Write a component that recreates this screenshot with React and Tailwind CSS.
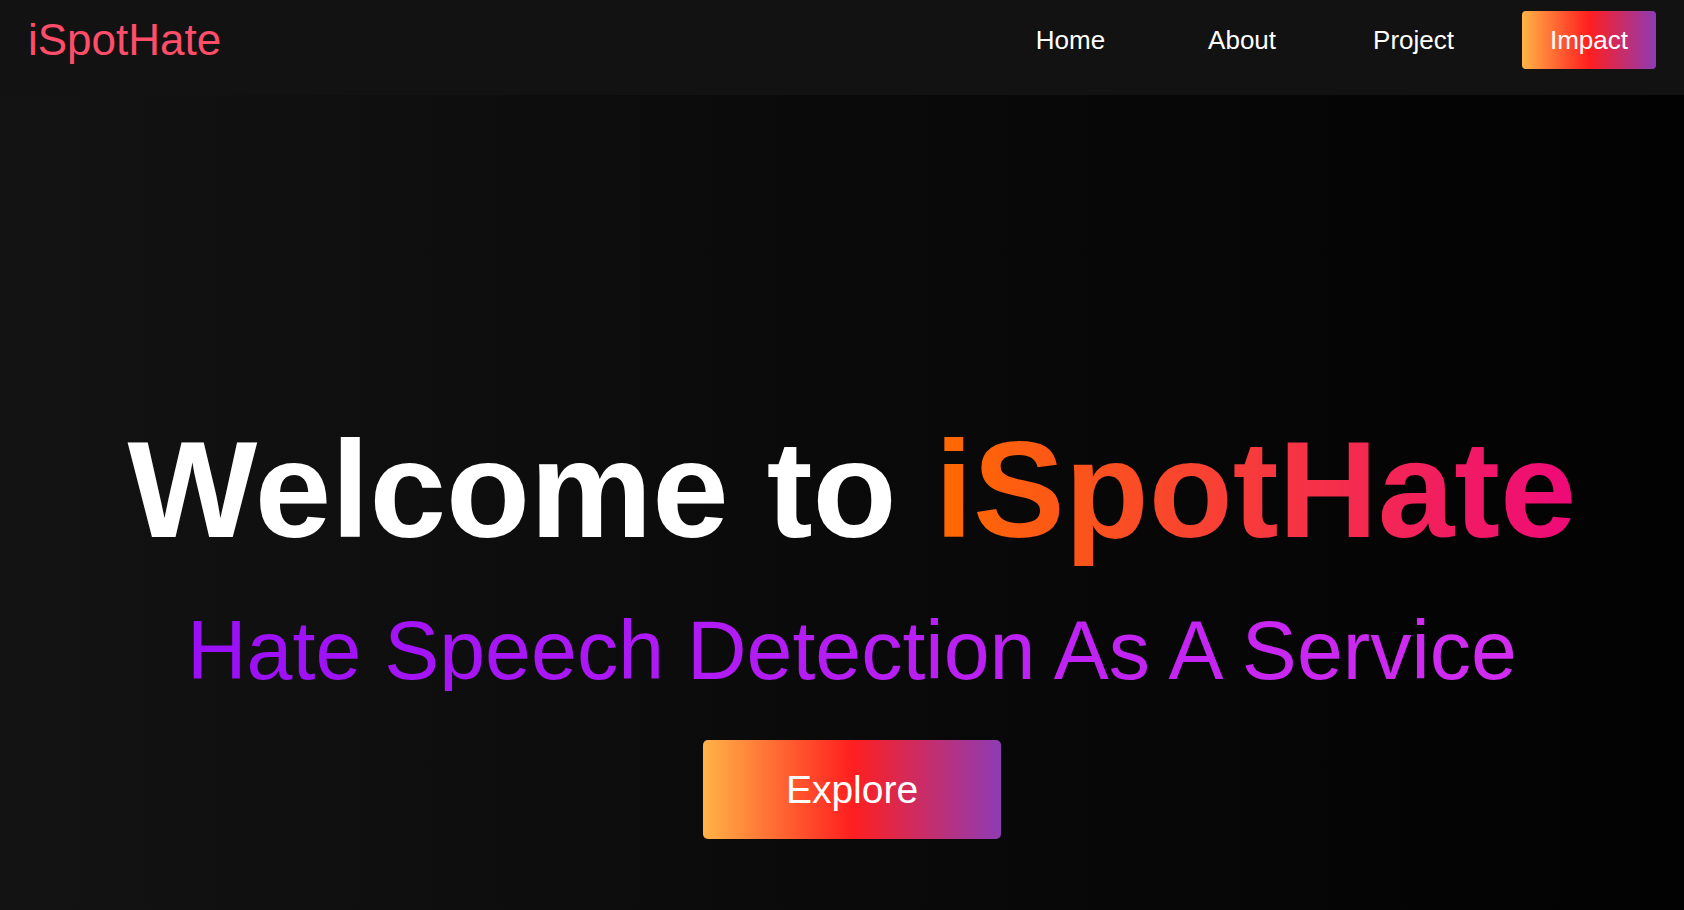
export default function App() {
  return (
    <div className="min-h-screen w-full flex flex-col bg-[#121212]" style={{ fontFamily: '"Liberation Sans", Arial, sans-serif' }}>
      <nav className="h-[95px] flex items-start justify-between bg-[#121212] pl-[28px] pr-[28px] pt-[11px]">
        <div className="h-[58px] flex items-center">
          <span className="text-[44px] leading-none text-[#ff4d6a]">iSpotHate</span>
        </div>
        <div className="h-[58px] flex items-center">
          <a className="px-[28px] text-[26px] leading-none text-white">Home</a>
          <a className="ml-[47px] px-[28px] text-[26px] leading-none text-white">About</a>
          <a className="ml-[41px] px-[28px] text-[26px] leading-none text-white">Project</a>
          <a className="ml-[40px] h-[58px] flex items-center px-[28px] text-[26px] leading-none text-white rounded-[4px] bg-[linear-gradient(90deg,#ffb347_0%,#ff1f1f_50%,#8e3bb5_100%)]">Impact</a>
        </div>
      </nav>
      <main className="flex-1 flex flex-col items-center pt-[326px] pl-[20px] bg-[linear-gradient(90deg,#131313_0%,#0a0a0a_50%,#020202_100%)]">
        <h1 className="text-[137.5px] leading-none font-bold text-white whitespace-nowrap">
          Welcome to{" "}
          <span className="bg-[linear-gradient(90deg,#ff6a00,#ee0979)] bg-clip-text text-transparent">iSpotHate</span>
        </h1>
        <p className="mt-[50px] text-[82.5px] leading-none whitespace-nowrap bg-[linear-gradient(90deg,#9a0ff7,#d22cf0)] bg-clip-text text-transparent">
          Hate Speech Detection As A Service
        </p>
        <button className="mt-[49px] w-[298px] h-[99px] flex items-center justify-center rounded-[5px] text-[39px] leading-none text-white bg-[linear-gradient(90deg,#ffb347_0%,#ff1f1f_50%,#8e3bb5_100%)]">
          Explore
        </button>
      </main>
    </div>
  );
}
